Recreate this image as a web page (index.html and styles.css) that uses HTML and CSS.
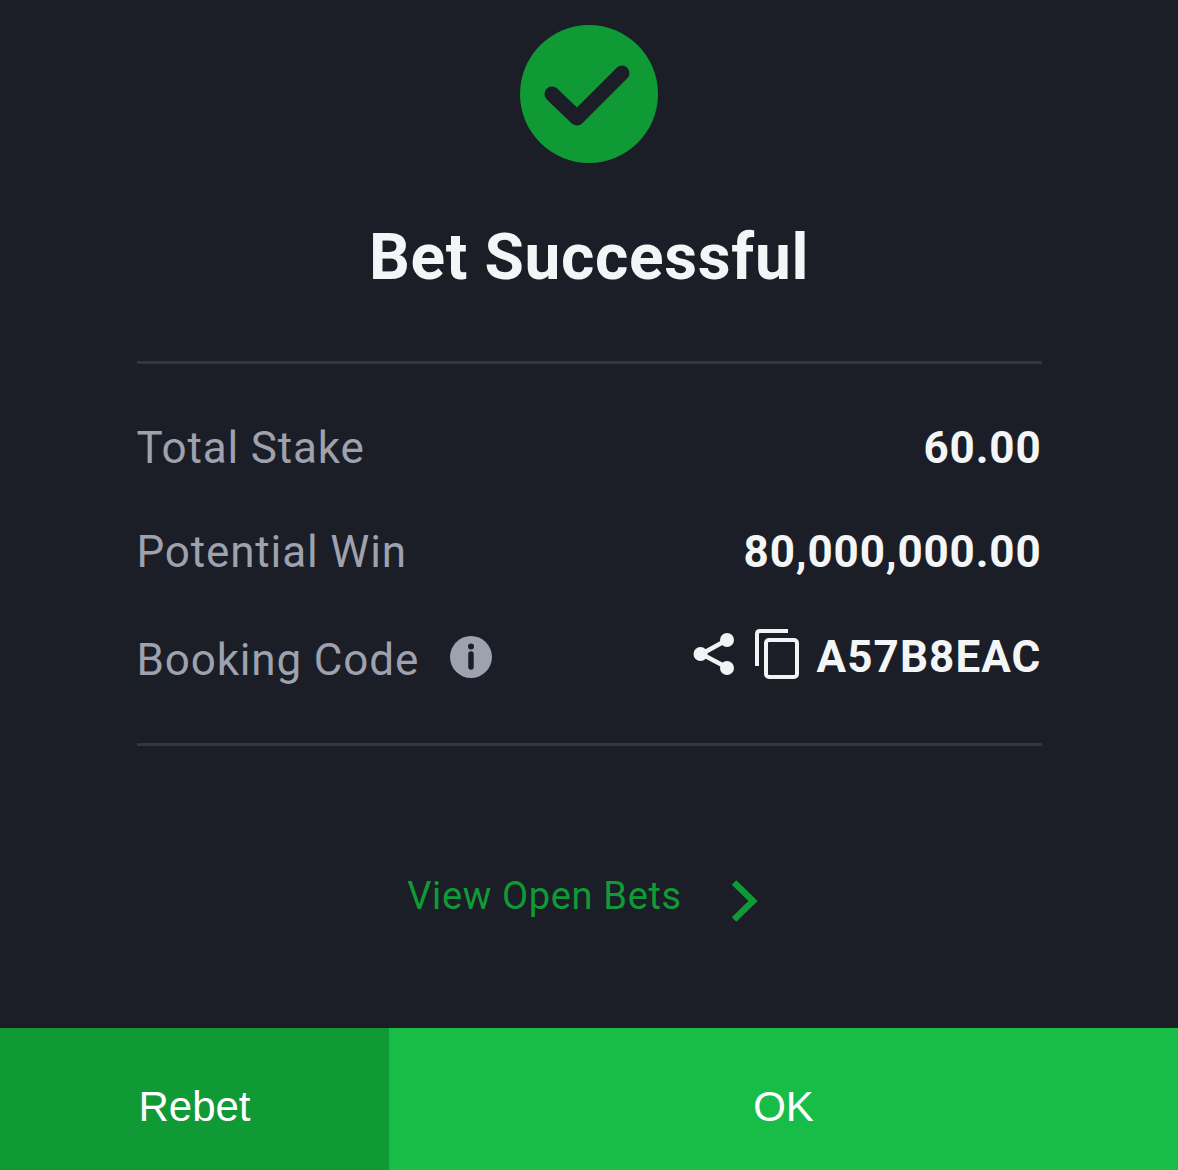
FILE: index.html
```html
<!DOCTYPE html>
<html lang="en">
<head>
<meta charset="utf-8">
<title>Bet Successful</title>
<link rel="stylesheet" href="styles.css">
</head>
<body>
<main class="screen">
  <section class="content">
    <svg class="check" viewBox="0 0 138 138" width="138" height="138">
      <circle cx="69" cy="69" r="69" fill="#0f9a36"/>
      <path d="M32 69 L57 93 L102 48" fill="none" stroke="#1b1e26" stroke-width="15" stroke-linecap="round" stroke-linejoin="round"/>
    </svg>
    <h1 class="title">Bet Successful</h1>
    <div class="summary">
      <div class="row row-stake">
        <span class="label">Total Stake</span>
        <span class="value">60.00</span>
      </div>
      <div class="row row-win">
        <span class="label">Potential Win</span>
        <span class="value">80,000,000.00</span>
      </div>
      <div class="row row-code">
        <span class="label-group">
          <span class="label">Booking Code</span>
          <svg class="info" viewBox="0 0 42 42" width="42" height="42">
            <circle cx="21" cy="21" r="21" fill="#9ea1ae"/>
            <circle cx="21" cy="10.5" r="3" fill="#1b1e26"/>
            <path d="M21 18 V31" stroke="#1b1e26" stroke-width="5.5" stroke-linecap="round"/>
          </svg>
        </span>
        <span class="code-group">
          <svg class="share" viewBox="0 0 42 46" width="42" height="46">
            <path d="M33 9.5 L8.5 23 L33 36" fill="none" stroke="#f2f3f5" stroke-width="4.5"/>
            <circle cx="34" cy="9" r="7" fill="#f2f3f5"/>
            <circle cx="7.5" cy="23" r="7" fill="#f2f3f5"/>
            <circle cx="34" cy="37" r="7" fill="#f2f3f5"/>
          </svg>
          <svg class="copy" viewBox="0 0 44 50" width="44" height="50">
            <path d="M2 37 V5 Q2 2 5 2 H33" fill="none" stroke="#f2f3f5" stroke-width="4"/>
            <rect x="11" y="11" width="31" height="37" rx="3" fill="none" stroke="#f2f3f5" stroke-width="4"/>
          </svg>
          <span class="value value-code">A57B8EAC</span>
        </span>
      </div>
    </div>
    <a class="open-bets">
      <span>View Open Bets</span>
      <svg class="chevron" viewBox="0 0 26 42" width="26" height="42">
        <path d="M2 2.5 L21 21 L2 39.5" fill="none" stroke="#0f9a36" stroke-width="6.5"/>
      </svg>
    </a>
  </section>
  <footer class="actions">
    <button class="btn btn-rebet">Rebet</button>
    <button class="btn btn-ok">OK</button>
  </footer>
</main>
</body>
</html>
```

FILE: styles.css
```css
* { box-sizing: border-box; }
html, body { margin: 0; padding: 0; }
body {
  width: 1178px;
  height: 1170px;
  overflow: hidden;
  background: #1b1e26;
  font-family: Roboto, "Liberation Sans", sans-serif;
}
.screen {
  height: 1170px;
  display: flex;
  flex-direction: column;
}
.content {
  flex: 1;
  display: flex;
  flex-direction: column;
  align-items: center;
  padding-top: 25px;
}
.check { display: block; }
.title {
  margin: 57px 0 0;
  height: 76px;
  font-size: 64px;
  line-height: 76px;
  font-weight: 700;
  letter-spacing: 0.65px;
  color: #f4f5f7;
}
.summary {
  width: 905px;
  margin-top: 65px;
  height: 385px;
  border-top: 3px solid #33363e;
  border-bottom: 3px solid #33363e;
  padding-top: 32px;
}
.row {
  display: flex;
  justify-content: space-between;
  align-items: center;
}
.row-stake { height: 104px; }
.row-win { height: 104px; }
.row-code { height: 112px; }
.label {
  font-size: 44px;
  color: #9ea1ae;
  line-height: 52px;
  letter-spacing: 0.85px;
}
.value {
  font-size: 44px;
  font-weight: 700;
  color: #f4f5f7;
  line-height: 52px;
  letter-spacing: 0.85px;
}
.value-code { letter-spacing: 1.1px; }
.label-group, .code-group {
  display: flex;
  align-items: center;
}
.code-group { margin-top: -6px; }
.info { margin-left: 31px; margin-top: -6px; }
.share { margin-right: 20px; margin-top: -6px; }
.copy { margin-right: 18px; margin-top: -6px; }
.open-bets {
  display: flex;
  align-items: center;
  margin-top: 124px;
  margin-right: 13px;
  font-size: 38px;
  line-height: 46px;
  letter-spacing: 0.65px;
  color: #0f9a36;
}
.chevron { margin-left: 50px; margin-top: 10px; }
.actions {
  display: flex;
  height: 142px;
}
.btn {
  border: 0;
  padding: 16px 0 0;
  color: #fff;
  font-family: "Liberation Sans", Arial, sans-serif;
  font-size: 42px;
}
.btn-rebet { width: 389px; background: #0f9a36; }
.btn-ok { flex: 1; background: #17bd46; }
```
